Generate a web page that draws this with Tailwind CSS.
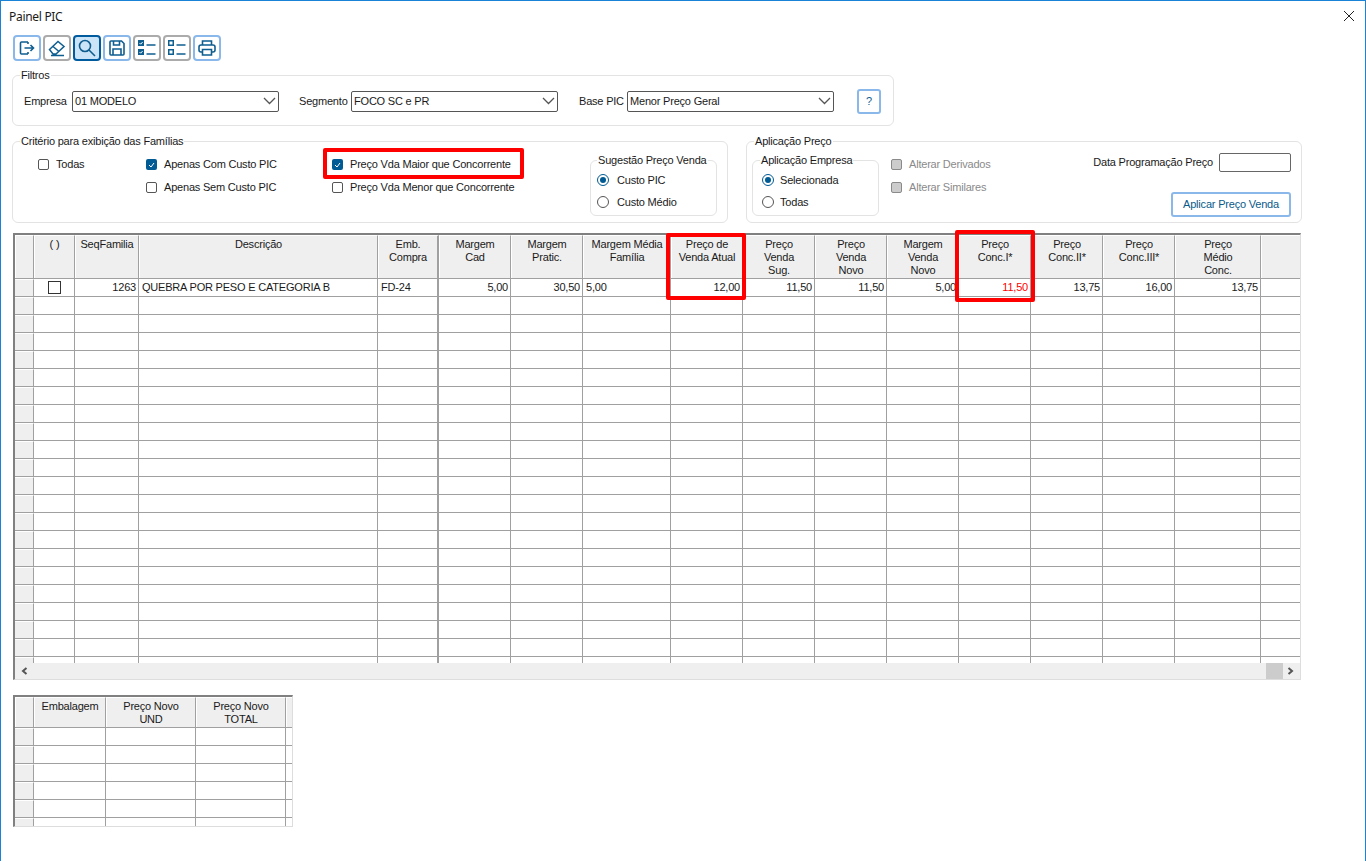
<!DOCTYPE html>
<html lang="pt-BR">
<head>
    <meta charset="UTF-8">
    <title>Painel PIC</title>
    <script src="https://cdn.jsdelivr.net/npm/@tailwindcss/browser@4"></script>
</head>
<body class="bg-white">
<div class="relative w-[1366px] h-[861px] border-t border-x border-[#1883d7] bg-white text-[11px] leading-[13px] tracking-[-0.2px] text-[#1a1a1a] font-['Liberation_Sans',sans-serif]">

    <!-- title bar -->
    <div class="flex items-center justify-between h-[30px] pl-2 pr-[10px]">
        <span class="text-[12px] tracking-[-0.3px] font-['Noto_Sans',sans-serif]">Painel PIC</span>
        <svg width="10" height="10" viewBox="0 0 10 10" class="mr-[1px]"><path d="M0 0L10 10M10 0L0 10" stroke="#222" fill="none"/></svg>
    </div>

    <!-- toolbar -->
    <div class="flex gap-[2px] ml-[12px] mt-[4px] h-[26px]">
        <button class="flex items-center justify-center w-[28px] h-[26px] rounded-[4px] border-2 border-[#8ab8ea]">
            <svg width="18" height="18" viewBox="0 0 18 18" fill="none" stroke="#0f5e90" stroke-width="1.6"><path d="M10 3H3.5a1 1 0 0 0-1 1v10a1 1 0 0 0 1 1H10M10 3v2M10 15v-2M6.5 9h9M12.5 6l3 3-3 3"/></svg>
        </button>
        <button class="flex items-center justify-center w-[28px] h-[26px] rounded-[4px] border-2 border-[#ababab]">
            <svg width="18" height="18" viewBox="0 0 18 18" fill="none" stroke="#0f5e90" stroke-width="1.5"><path d="M1.5 10.5L10 2.5l6 5-8 7.5H5zM5 7.5l6 5M3 16.5h13"/></svg>
        </button>
        <button class="flex items-center justify-center w-[28px] h-[26px] rounded-[4px] border-2 border-[#005a9e] bg-[#cce4f7]">
            <svg width="18" height="18" viewBox="0 0 18 18" fill="none" stroke="#0f5e90" stroke-width="1.6"><circle cx="7" cy="7" r="5.5"/><path d="M11 11l6 6"/></svg>
        </button>
        <button class="flex items-center justify-center w-[28px] h-[26px] rounded-[4px] border-2 border-[#8ab8ea]">
            <svg width="18" height="18" viewBox="0 0 18 18" fill="none" stroke="#0f5e90" stroke-width="1.6"><path d="M2 3a1 1 0 0 1 1-1h10.500l2.500 2.500V15a1 1 0 0 1-1 1H3a1 1 0 0 1-1-1zM5.500 2v4h6V2M5 16v-6h8v6"/></svg>
        </button>
        <button class="flex items-center justify-center w-[28px] h-[26px] rounded-[4px] border-2 border-[#ababab]">
            <svg width="20" height="18" viewBox="0 0 20 18"><path fill="#0f5e90" d="M1 1h6v6H1zM1 10h6v6H1z"/><path d="M2.500 4l1.200 1.200L5.600 3M2.500 13l1.200 1.200L5.600 12" stroke="#fff" fill="none"/><path d="M9.500 6h9M9.500 15h9" stroke="#0f5e90" stroke-width="1.500"/></svg>
        </button>
        <button class="flex items-center justify-center w-[28px] h-[26px] rounded-[4px] border-2 border-[#ababab]">
            <svg width="20" height="18" viewBox="0 0 20 18" fill="none" stroke="#0f5e90" stroke-width="1.500"><path d="M1.750 1.750h4.500v4.500h-4.500zM1.750 10.750h4.500v4.500h-4.500zM9.500 6h9M9.500 15h9"/></svg>
        </button>
        <button class="flex items-center justify-center w-[28px] h-[26px] rounded-[4px] border-2 border-[#8ab8ea]">
            <svg width="18" height="18" viewBox="0 0 18 18" fill="none" stroke="#0f5e90" stroke-width="1.600"><path d="M4.500 6V2h9v4M4.500 13H3a2 2 0 0 1-2-2V8a2 2 0 0 1 2-2h12a2 2 0 0 1 2 2v3a2 2 0 0 1-2 2h-1.500M4.500 10.500h9V16h-9z"/></svg>
        </button>
    </div>

    <!-- Filtros -->
    <div class="relative flex items-center w-[882px] h-[51px] ml-[11px] mt-[14px] pl-[11px] pt-[1px] border border-[#e3e3e3] rounded-[6px]">
        <span class="absolute left-[7px] top-[-7px] bg-white px-[1px]">Filtros</span>
        <span class="w-[48px]">Empresa</span>
        <div class="flex items-center justify-between w-[207px] h-[21px] pl-[2px] pr-[2px] border border-[#555] rounded-[2px]">
            <span>01 MODELO</span>
            <svg width="13" height="8" viewBox="0 0 13 8" fill="none" stroke="#555" stroke-width="1.300"><path d="M1 1l5.500 5.500L12 1"/></svg>
        </div>
        <span class="w-[52px] ml-[20px]">Segmento</span>
        <div class="flex items-center justify-between w-[207px] h-[21px] pl-[2px] pr-[2px] border border-[#555] rounded-[2px]">
            <span>FOCO SC e PR</span>
            <svg width="13" height="8" viewBox="0 0 13 8" fill="none" stroke="#555" stroke-width="1.300"><path d="M1 1l5.500 5.500L12 1"/></svg>
        </div>
        <span class="w-[48px] ml-[21px]">Base PIC</span>
        <div class="flex items-center justify-between w-[207px] h-[21px] pl-[2px] pr-[2px] border border-[#555] rounded-[2px]">
            <span>Menor Preço Geral</span>
            <svg width="13" height="8" viewBox="0 0 13 8" fill="none" stroke="#555" stroke-width="1.300"><path d="M1 1l5.500 5.500L12 1"/></svg>
        </div>
        <button class="w-[24px] h-[25px] ml-[23px] rounded-[3px] border-2 border-[#8ab8ea] text-[#0f5e90]">?</button>
    </div>

    <div class="flex ml-[11px] mt-[15px]">
        <!-- Criterio -->
        <div class="relative flex w-[716px] h-[82px] pt-[11px] pl-[25px] border border-[#e3e3e3] rounded-[6px]">
            <span class="absolute left-[7px] top-[-7px] bg-white px-[1px]">Critério para exibição das Famílias</span>
            <div class="w-[108px]">
                <label class="flex items-center gap-[7px] h-[23px]"><span class="w-[11px] h-[11px] border border-[#555] rounded-[2px]"></span>Todas</label>
            </div>
            <div class="w-[186px]">
                <label class="flex items-center gap-[7px] h-[23px]">
                    <span class="flex items-center justify-center w-[11px] h-[11px] bg-[#005a94] rounded-[2px]"><svg width="7" height="6" viewBox="0 0 7 6" fill="none" stroke="#fff"><path d="M1 3l2 2 3-4"/></svg></span>Apenas Com Custo PIC</label>
                <label class="flex items-center gap-[7px] h-[23px]"><span class="w-[11px] h-[11px] border border-[#555] rounded-[2px]"></span>Apenas Sem Custo PIC</label>
            </div>
            <div class="w-[258px]">
                <label class="flex items-center gap-[7px] h-[23px]">
                    <span class="flex items-center justify-center w-[11px] h-[11px] bg-[#005a94] rounded-[2px]"><svg width="7" height="6" viewBox="0 0 7 6" fill="none" stroke="#fff"><path d="M1 3l2 2 3-4"/></svg></span>Preço Vda Maior que Concorrente</label>
                <label class="flex items-center gap-[7px] h-[23px]"><span class="w-[11px] h-[11px] border border-[#555] rounded-[2px]"></span>Preço Vda Menor que Concorrente</label>
            </div>
            <div class="relative w-[127px] h-[56px] mt-[7px] pt-[8px] pl-[6px] border border-[#e3e3e3] rounded-[6px]">
                <span class="absolute left-[6px] top-[-7px] bg-white px-[1px]">Sugestão Preço Venda</span>
                <label class="flex items-center gap-[8px] h-[22px]"><span class="flex items-center justify-center w-[12px] h-[12px] rounded-full border border-[#005a94]"><span class="w-[6px] h-[6px] rounded-full bg-[#005a94]"></span></span>Custo PIC</label>
                <label class="flex items-center gap-[8px] h-[22px]"><span class="w-[12px] h-[12px] rounded-full border border-[#555]"></span>Custo Médio</label>
            </div>
            <div class="absolute left-[310px] top-[6px] w-[201px] h-[31px] border-4 border-[#f00] rounded-[2px]"></div>
        </div>

        <!-- Aplicacao -->
        <div class="relative flex w-[556px] h-[82px] ml-[18px] border border-[#e3e3e3] rounded-[6px]">
            <span class="absolute left-[7px] top-[-7px] bg-white px-[1px]">Aplicação Preço</span>
            <div class="relative w-[127px] h-[56px] ml-[5px] mt-[18px] pt-[8px] pl-[9px] border border-[#e3e3e3] rounded-[6px]">
                <span class="absolute left-[7px] top-[-7px] bg-white px-[1px]">Aplicação Empresa</span>
                <label class="flex items-center gap-[6px] h-[22px]"><span class="flex items-center justify-center w-[12px] h-[12px] rounded-full border border-[#005a94]"><span class="w-[6px] h-[6px] rounded-full bg-[#005a94]"></span></span>Selecionada</label>
                <label class="flex items-center gap-[6px] h-[22px]"><span class="w-[12px] h-[12px] rounded-full border border-[#555]"></span>Todas</label>
            </div>
            <div class="ml-[12px] pt-[11px] text-[#8a8a8a]">
                <label class="flex items-center gap-[7px] h-[23px]"><span class="w-[11px] h-[11px] border border-[#8a8a8a] bg-[#ccc] rounded-[2px]"></span>Alterar Derivados</label>
                <label class="flex items-center gap-[7px] h-[23px]"><span class="w-[11px] h-[11px] border border-[#8a8a8a] bg-[#ccc] rounded-[2px]"></span>Alterar Similares</label>
            </div>
            <div class="flex flex-col items-end ml-auto mr-[10px] pt-[11px]">
                <div class="flex items-center gap-[6px]">
                    <span>Data Programação Preço</span>
                    <div class="w-[72px] h-[19px] border border-[#666] rounded-[2px]"></div>
                </div>
                <button class="w-[120px] h-[25px] mt-[20px] rounded-[3px] border-2 border-[#8ab8ea] text-[#0a5a8a]">Aplicar Preço Venda</button>
            </div>
        </div>
    </div>

    <!-- main grid -->
    <div class="relative w-[1288px] ml-[12px] mt-[10px]">
        <div class="w-[1288px] h-[447px] border-t-2 border-l-2 border-t-[#808080] border-l-[#808080] border-r border-b border-r-[#ddd] border-b-[#ddd]">
            <div id="grid-head" class="grid grid-cols-[19px_41px_64px_239px_61px_72px_72px_88px_72px_72px_72px_72px_72px_72px_72px_86px_39px] h-[44px] bg-[#efefef] border-b border-[#a0a0a0] text-center"></div>
            <div id="grid-body" class="h-[384px] overflow-hidden"></div>
            <div class="relative flex items-center justify-between h-[16px] bg-[#efefef] px-[6px]">
                <svg width="7" height="8" viewBox="0 0 7 8" fill="none" stroke="#555" stroke-width="2"><path d="M5.500 1L2 4l3.500 3"/></svg>
                <div class="absolute left-[1251px] top-0 w-[17px] h-[16px] bg-[#ccc]"></div>
                <svg width="7" height="8" viewBox="0 0 7 8" fill="none" stroke="#555" stroke-width="2"><path d="M1.500 1L5 4 1.500 7"/></svg>
            </div>
        </div>
        <div class="absolute left-[653px] top-0 w-[80px] h-[67px] border-4 border-[#f00] rounded-[2px]"></div>
        <div class="absolute left-[942px] top-[-3px] w-[80px] h-[72px] border-4 border-[#f00] rounded-[2px]"></div>
    </div>

    <!-- lower grid -->
    <div class="w-[280px] h-[132px] ml-[12px] mt-[15px] border-t-2 border-l-2 border-t-[#808080] border-l-[#808080] border-r border-b border-r-[#ddd] border-b-[#ddd]">
        <div id="sub-head" class="grid grid-cols-[19px_72px_90px_90px_6px] h-[31px] bg-[#efefef] border-b border-[#a0a0a0] text-center"></div>
        <div id="sub-body" class="h-[98px] overflow-hidden"></div>
    </div>
</div>

<script>
    const heads = ['', '( )', 'SeqFamilia', 'Descrição', 'Emb.<br>Compra', 'Margem<br>Cad', 'Margem<br>Pratic.', 'Margem Média<br>Família', 'Preço de<br>Venda Atual', 'Preço<br>Venda<br>Sug.', 'Preço<br>Venda<br>Novo', 'Margem<br>Venda<br>Novo', 'Preço<br>Conc.I*', 'Preço<br>Conc.II*', 'Preço<br>Conc.III*', 'Preço<br>Médio<br>Conc.', ''];
    const firstRow = ['', '', '1263', 'QUEBRA POR PESO E CATEGORIA B', 'FD-24', '5,00', '30,50', '5,00', '12,00', '11,50', '11,50', '5,00', '11,50', '13,75', '16,00', '13,75', ''];
    const leftCols = [3, 4, 7];
    const mainCols = 'grid grid-cols-[19px_41px_64px_239px_61px_72px_72px_88px_72px_72px_72px_72px_72px_72px_72px_86px_39px] h-[18px] border-b border-[#a0a0a0]';
    const subCols = 'grid grid-cols-[19px_72px_90px_90px_6px] h-[18px] border-b border-[#a0a0a0]';

    function headCells(list) {
        return list.map((text, i) => {
            const last = i === list.length - 1;
            const edge = last ? '' : (list.length > 10 && i === 4 ? 'border-r-2 border-[#a0a0a0]' : 'border-r border-[#a0a0a0]');
            return `<div class="pt-[2px] border-l border-t border-l-white border-t-white ${edge}">${text}</div>`;
        }).join('');
    }

    function rowCells(count, values, thick) {
        let html = '';
        for (let i = 0; i < count; i++) {
            const last = i === count - 1;
            let cls = last ? '' : (i === thick ? 'border-r-2 border-[#a0a0a0]' : 'border-r border-[#a0a0a0]');
            if (i === 0) cls += ' bg-[#efefef] border-t border-t-white';
            let inner = '';
            if (values) {
                if (i === 1) {
                    cls += ' flex items-center justify-center';
                    inner = '<span class="w-[13px] h-[13px] border border-[#333]"></span>';
                } else {
                    inner = values[i];
                    cls += leftCols.includes(i) ? ' pl-[3px] text-left' : ' pr-[2px] text-right';
                    cls += ' leading-[17px]';
                    if (i === 12) cls += ' text-[#f00]';
                }
            }
            html += `<div class="${cls}">${inner}</div>`;
        }
        return html;
    }

    document.getElementById('grid-head').innerHTML = headCells(heads);
    let body = '';
    for (let r = 0; r < 22; r++) {
        body += `<div class="${mainCols}">${rowCells(17, r === 0 ? firstRow : null, 4)}</div>`;
    }
    document.getElementById('grid-body').innerHTML = body;

    document.getElementById('sub-head').innerHTML = headCells(['', 'Embalagem', 'Preço Novo<br>UND', 'Preço Novo<br>TOTAL', '']);
    let sub = '';
    for (let r = 0; r < 6; r++) {
        sub += `<div class="${subCols}">${rowCells(5, null, -1)}</div>`;
    }
    document.getElementById('sub-body').innerHTML = sub;
</script>
</body>
</html>
